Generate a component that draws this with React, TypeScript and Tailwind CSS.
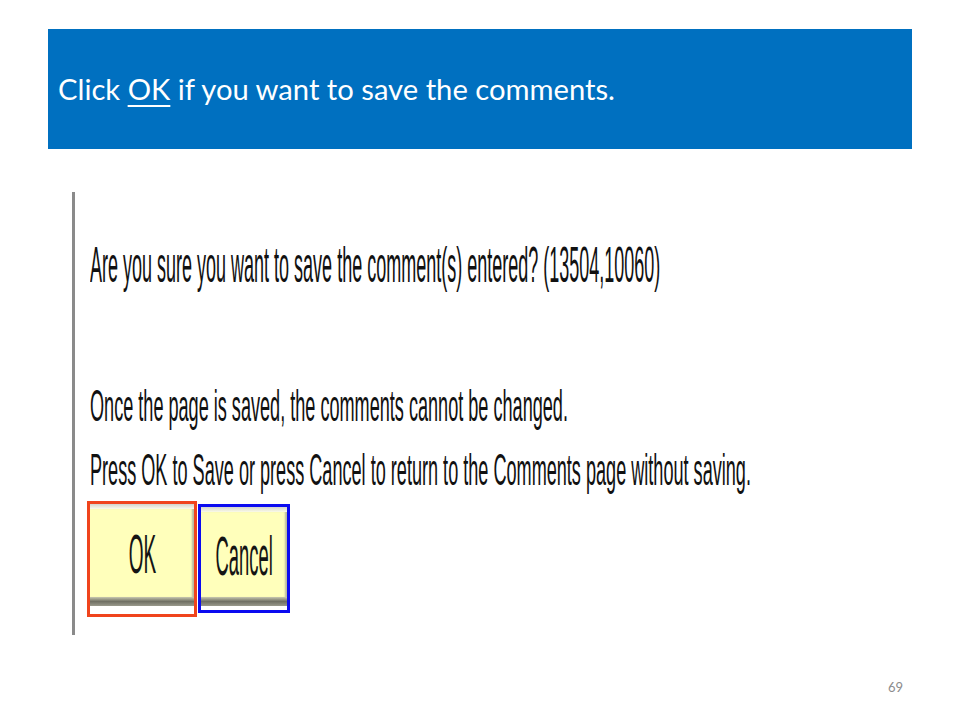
import React from "react";

const shot = { fontFamily: '"Liberation Sans", Arial, sans-serif' };
const slide = { fontFamily: 'Lato, "Open Sans", sans-serif' };

// the old dialog screenshot is a vertically stretched Arial, so each line is scaled
function DialogButton({ label, textClass }: { label: string; textClass: string }) {
  return (
    <div className="flex h-full w-full flex-col">
      <div className="h-[5px] bg-gradient-to-b from-[#d4d4cc] to-[#fbfbe8]" />
      <div className="flex flex-1 items-center justify-center bg-[#ffffbb] shadow-[inset_-3px_0_2px_-1px_#b8b8a0]">
        <span className={`inline-block whitespace-nowrap text-[20px] leading-[20px] text-[#141414] ${textClass}`} style={shot}>
          {label}
        </span>
      </div>
      <div className="h-[9px] bg-gradient-to-b from-[#c8c8b0] via-[#707064] to-[#9a9a8c]" />
    </div>
  );
}

export default function App() {
  return (
    <div className="flex h-[720px] w-[960px] flex-col overflow-hidden bg-white">
      <div className="mx-[48px] mt-[29px] flex h-[120px] items-center bg-[#0070c0] pl-[10px]">
        <p className="text-[29.2px] leading-none text-white" style={slide}>
          Click <span className="underline decoration-[2px] underline-offset-[5px]">OK</span> if you want to save the comments.
        </p>
      </div>

      <div className="ml-[72px] mt-[43px] h-[443px] border-l-[3px] border-[#8a8a8a]">
        <div className="mt-[46px] h-[50px] pl-[15px]">
          <span className="inline-block origin-top-left scale-x-[0.9] scale-y-[2.5] whitespace-nowrap text-[20px] leading-[20px] text-[#111]" style={shot}>
            Are you sure you want to save the comment(s) entered? (13504,10060)
          </span>
        </div>
        <div className="mt-[94px] h-[44px] pl-[15px]">
          <span className="inline-block origin-top-left scale-x-[0.905] scale-y-[2.25] whitespace-nowrap text-[20px] leading-[20px] text-[#111]" style={shot}>
            Once the page is saved, the comments cannot be changed.
          </span>
        </div>
        <div className="mt-[20px] h-[45px] pl-[15px]">
          <span className="inline-block origin-top-left scale-x-[0.905] scale-y-[2.25] whitespace-nowrap text-[20px] leading-[20px] text-[#111]" style={shot}>
            Press OK to Save or press Cancel to return to the Comments page without saving.
          </span>
        </div>

        <div className="mt-[10px] flex items-start gap-[1px] pl-[12px]">
          <div className="h-[116px] w-[110px] border-[3px] border-[#f0441c] pb-[8px]">
            <DialogButton label="OK" textClass="scale-x-[0.95] scale-y-[2.8]" />
          </div>
          <div className="mt-[3px] h-[109px] w-[92px] border-[3px] border-[#0b0bf0] pb-[4px]">
            <DialogButton label="Cancel" textClass="scale-x-[0.92] scale-y-[2.8]" />
          </div>
        </div>
      </div>

      <div className="mt-[43px] flex justify-end pr-[57px]">
        <span className="text-[13px] text-[#8c8c8c]" style={slide}>
          69
        </span>
      </div>
    </div>
  );
}
